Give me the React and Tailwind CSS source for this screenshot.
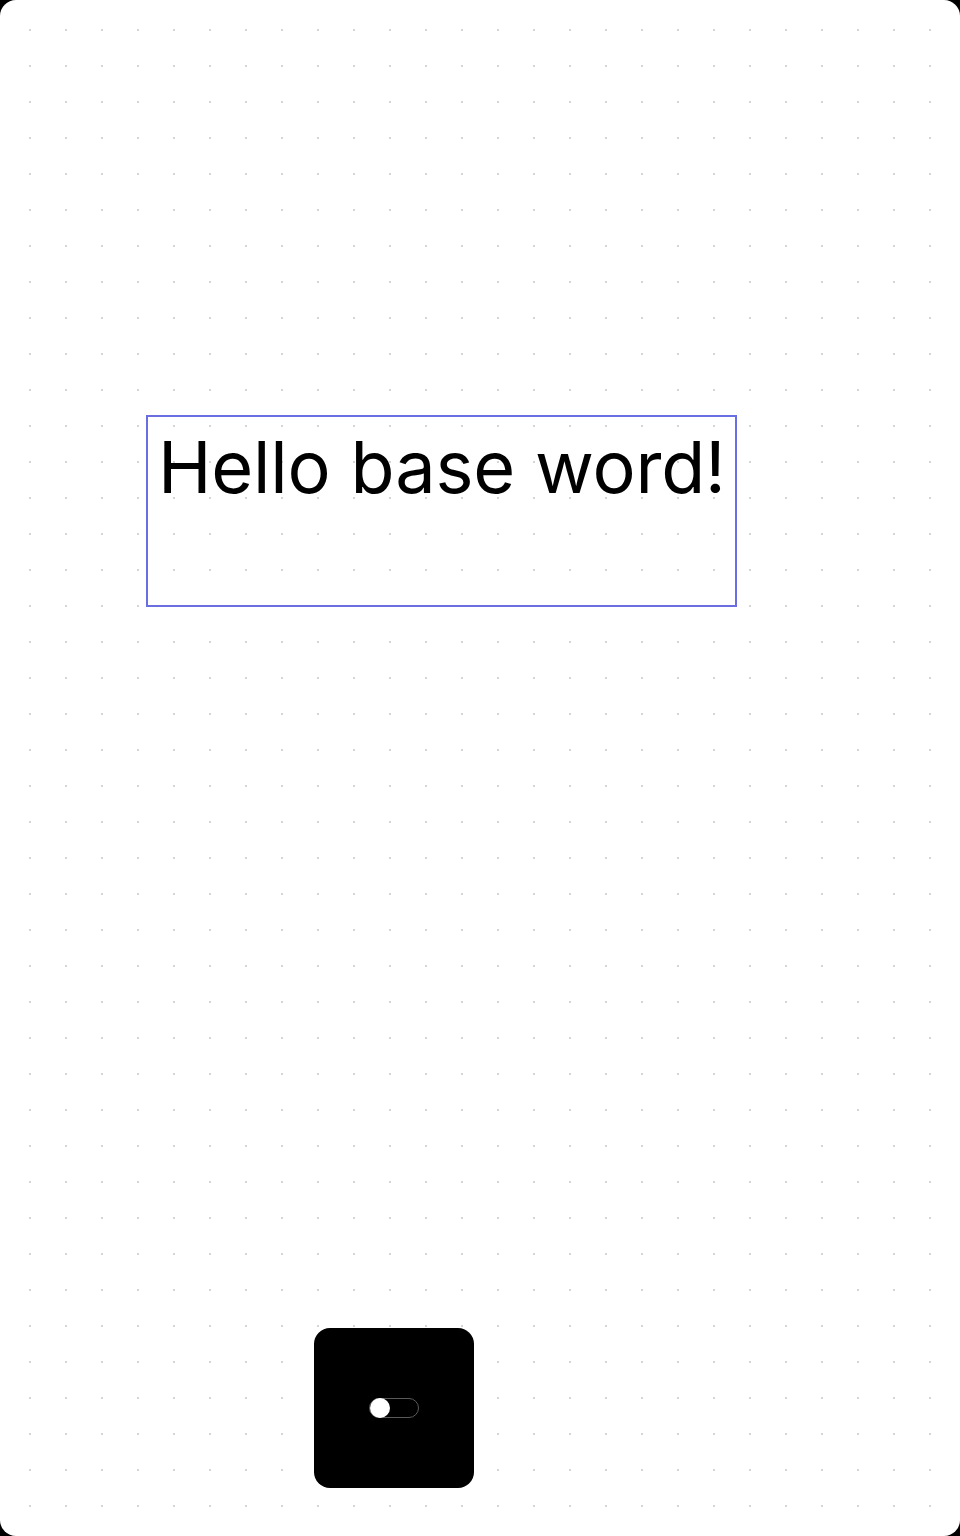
import React from 'react';

const dotGrid = {
  backgroundImage: 'radial-gradient(circle, #d6d6d6 1.1px, transparent 1.5px)',
  backgroundSize: '36px 36px',
  backgroundPosition: '12px 12px',
};

const Toggle = () => (
  <div className="relative w-[50px] h-[20px] rounded-full border border-[#5a5a5a]">
    <div className="absolute left-[0px] top-[-1px] w-[20px] h-[20px] rounded-full bg-white" />
  </div>
);

export default function App() {
  return (
    <div className="w-[960px] h-[1536px] bg-black">
      <div
        className="w-full h-full bg-white rounded-2xl flex flex-col font-['Inter',sans-serif]"
        style={dotGrid}
      >
        <div className="ml-[146px] mt-[415px] w-[591px] h-[192px] border-2 border-[#6a6ee0] pl-[10px]">
          <p className="text-[72px] leading-[100px] text-black tracking-[-0.2px] whitespace-nowrap">Hello base word!</p>
        </div>
        <div className="ml-[314px] mt-[721px] w-[160px] h-[160px] bg-black rounded-2xl flex items-center justify-center">
          <Toggle />
        </div>
      </div>
    </div>
  );
}
